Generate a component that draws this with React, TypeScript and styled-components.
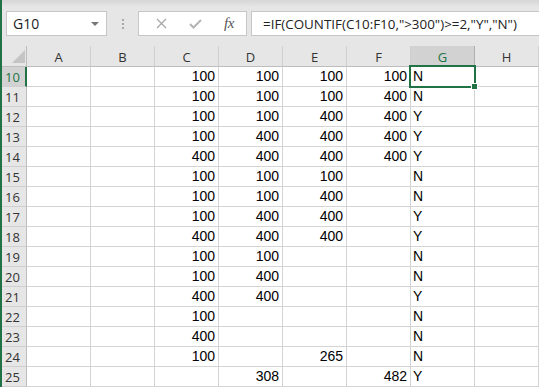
import React from "react";
import styled, { createGlobalStyle } from "styled-components";

const green = "#217346";

const GlobalStyle = createGlobalStyle`
  * { box-sizing: border-box; }
  body {
    margin: 0;
    background: #fff;
    font-family: "Open Sans", "Noto Sans", sans-serif;
  }
`;

const Window = styled.div`
  width: 539px;
  height: 387px;
  overflow: hidden;
  border-left: 2px solid ${green};
  background: #fff;
`;

const Toolbar = styled.div`
  height: 46px;
  display: flex;
  align-items: flex-start;
  padding: 11px 0 0 4px;
  background: linear-gradient(#d6d6d6 0px, #e6e6e6 7px, #e6e6e6 100%);
`;

const NameBox = styled.div`
  width: 101px;
  height: 25px;
  background: #fff;
  border: 1px solid #c6c6c6;
  display: flex;
  align-items: center;
  justify-content: space-between;
  padding: 0 7px 0 6px;
  font-size: 14px;
  color: #222;
`;

const Caret = styled.span`
  width: 0;
  height: 0;
  border-left: 4px solid transparent;
  border-right: 4px solid transparent;
  border-top: 4px solid #777;
`;

const Grip = styled.div`
  width: 31px;
  height: 25px;
  display: flex;
  flex-direction: column;
  align-items: center;
  justify-content: center;
  gap: 2px;

  span {
    width: 2px;
    height: 2px;
    background: #a8a8a8;
  }
`;

const FxButtons = styled.div`
  width: 109px;
  height: 25px;
  background: #fff;
  border: 1px solid #c6c6c6;
  display: flex;
  align-items: center;
  padding-left: 13px;
  gap: 16px;
`;

const IconSlot = styled.span`
  width: 18px;
  display: flex;
  justify-content: center;
  align-items: center;
`;

const Fx = styled.span`
  font-family: "Liberation Serif", serif;
  font-style: italic;
  font-size: 15px;
  color: #555;
  letter-spacing: -0.5px;
`;

const FormulaInput = styled.div`
  flex: 1;
  height: 25px;
  margin-left: 4px;
  background: #fff;
  border: 1px solid #c6c6c6;
  border-right: none;
  display: flex;
  align-items: center;
  padding-left: 11px;
  font-size: 13.4px;
  color: #222;
  white-space: nowrap;
`;

const Sheet = styled.div`
  display: grid;
  grid-template-columns: 25px repeat(8, 64px);
  grid-template-rows: 21px repeat(16, 20px);
  font-family: "Liberation Sans", Arial, sans-serif;
`;

const Corner = styled.div`
  background: #e6e6e6;
  border-right: 1px solid #bdbdbd;
  border-bottom: 1px solid #bdbdbd;
  display: flex;
  justify-content: flex-end;
  align-items: flex-end;
  padding: 0 1px 3px 0;

  svg { display: block; }
`;

const ColHead = styled.div<{ $active?: boolean }>`
  background: ${(p) => (p.$active ? "#d2d2d2" : "#e6e6e6")};
  color: ${(p) => (p.$active ? green : "#333")};
  border-right: 1px solid ${(p) => (p.$active ? "#b0b0b0" : "#cfcfcf")};
  border-bottom: 1px solid ${(p) => (p.$active ? green : "#bdbdbd")};
  display: flex;
  align-items: center;
  justify-content: center;
  font-family: "Open Sans", "Noto Sans", sans-serif;
  font-size: 13px;
  padding-top: 1px;
`;

const RowHead = styled.div<{ $active?: boolean }>`
  background: ${(p) => (p.$active ? "#d2d2d2" : "#e6e6e6")};
  color: ${(p) => (p.$active ? green : "#333")};
  border-right: ${(p) => (p.$active ? `2px solid ${green}` : "1px solid #bdbdbd")};
  border-bottom: 1px solid #cfcfcf;
  display: flex;
  align-items: center;
  padding-left: 3px;
  font-family: "Open Sans", "Noto Sans", sans-serif;
  font-size: 13px;
`;

const Cell = styled.div<{ $align: "left" | "right" }>`
  position: relative;
  border-right: 1px solid #d4d4d4;
  border-bottom: 1px solid #d4d4d4;
  display: flex;
  align-items: flex-end;
  justify-content: ${(p) => (p.$align === "right" ? "flex-end" : "flex-start")};
  padding: 0 3px 2px 2px;
  font-size: 14px;
  color: #000;
  white-space: nowrap;
`;

const Selection = styled.div`
  position: absolute;
  left: -2px;
  top: -2px;
  right: -2px;
  bottom: -2px;
  border: 2px solid ${green};
  pointer-events: none;
  z-index: 2;

  &::after {
    content: "";
    position: absolute;
    right: -4px;
    bottom: -4px;
    width: 5px;
    height: 5px;
    background: ${green};
    border: 1px solid #fff;
  }
`;

const columns = ["A", "B", "C", "D", "E", "F", "G", "H"];

type Row = { n: number; v: (string | null)[] };

// values for C..F, then the result in G
const rows: Row[] = [
  { n: 10, v: ["100", "100", "100", "100", "N"] },
  { n: 11, v: ["100", "100", "100", "400", "N"] },
  { n: 12, v: ["100", "100", "400", "400", "Y"] },
  { n: 13, v: ["100", "400", "400", "400", "Y"] },
  { n: 14, v: ["400", "400", "400", "400", "Y"] },
  { n: 15, v: ["100", "100", "100", null, "N"] },
  { n: 16, v: ["100", "100", "400", null, "N"] },
  { n: 17, v: ["100", "400", "400", null, "Y"] },
  { n: 18, v: ["400", "400", "400", null, "Y"] },
  { n: 19, v: ["100", "100", null, null, "N"] },
  { n: 20, v: ["100", "400", null, null, "N"] },
  { n: 21, v: ["400", "400", null, null, "Y"] },
  { n: 22, v: ["100", null, null, null, "N"] },
  { n: 23, v: ["400", null, null, null, "N"] },
  { n: 24, v: ["100", null, "265", null, "N"] },
  { n: 25, v: [null, "308", null, "482", "Y"] },
];

const CancelIcon = () => (
  <svg width="11" height="11" viewBox="0 0 11 11">
    <path d="M1 1 L10 10 M10 1 L1 10" stroke="#a6a6a6" strokeWidth="1.2" fill="none" />
  </svg>
);

const EnterIcon = () => (
  <svg width="13" height="10" viewBox="0 0 13 10">
    <path d="M1 5 L4.5 8.5 L12 1" stroke="#b4b4b4" strokeWidth="2" fill="none" />
  </svg>
);

const App = () => {
  return (
    <>
      <GlobalStyle />
      <Window>
        <Toolbar>
          <NameBox>
            G10
            <Caret />
          </NameBox>
          <Grip>
            <span />
            <span />
            <span />
          </Grip>
          <FxButtons>
            <IconSlot>
              <CancelIcon />
            </IconSlot>
            <IconSlot>
              <EnterIcon />
            </IconSlot>
            <IconSlot>
              <Fx>fx</Fx>
            </IconSlot>
          </FxButtons>
          <FormulaInput>=IF(COUNTIF(C10:F10,"&gt;300")&gt;=2,"Y","N")</FormulaInput>
        </Toolbar>
        <Sheet>
          <Corner>
            <svg width="13" height="13" viewBox="0 0 13 13">
              <path d="M13 0 L13 13 L0 13 Z" fill="#c4c4c4" />
            </svg>
          </Corner>
          {columns.map((c) => (
            <ColHead key={c} $active={c === "G"}>
              {c}
            </ColHead>
          ))}
          {rows.map((r) => (
            <React.Fragment key={r.n}>
              <RowHead $active={r.n === 10}>{r.n}</RowHead>
              <Cell $align="right" />
              <Cell $align="right" />
              {r.v.map((val, i) => (
                <Cell key={i} $align={i === 4 ? "left" : "right"}>
                  {val}
                  {r.n === 10 && i === 4 && <Selection />}
                </Cell>
              ))}
              <Cell $align="right" />
            </React.Fragment>
          ))}
        </Sheet>
      </Window>
    </>
  );
};

export default App;
